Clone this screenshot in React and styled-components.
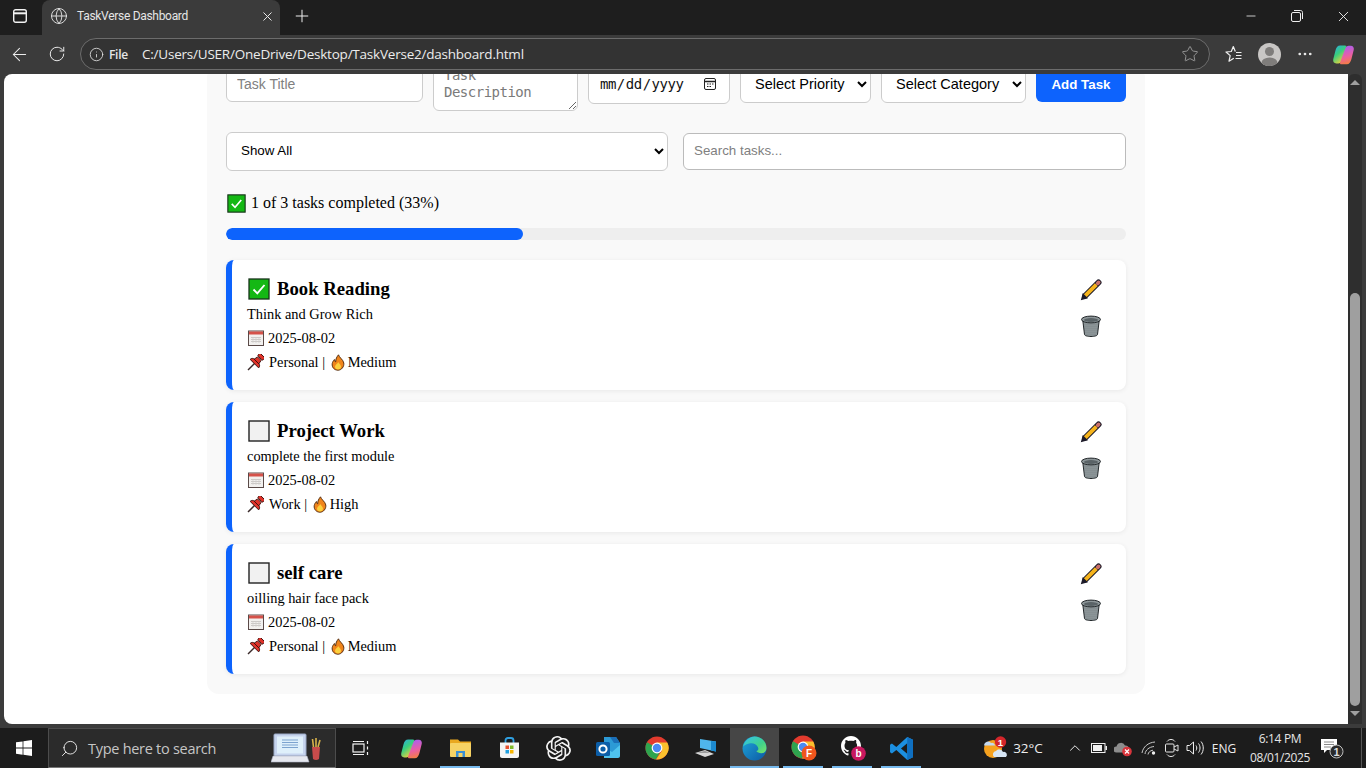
import React from "react";
import styled, { createGlobalStyle } from "styled-components";
import { ArrowLeft, RotateCw, Info, Star, X, Plus, Globe, Minus, MoreHorizontal, Search, ChevronUp } from "lucide-react";
import { SiOpenai } from "react-icons/si";

const Global = createGlobalStyle`
  html, body { margin: 0; padding: 0; height: 100%; overflow: hidden; background: #1f1f1f; }
  #root { height: 100%; }
  * { box-sizing: border-box; }
`;

const Screen = styled.div`
  width: 1366px; height: 768px; display: flex; flex-direction: column; overflow: hidden;
  font-family: "Open Sans", "Liberation Sans", sans-serif;
`;

/* ---------- browser chrome ---------- */
const TabStrip = styled.div`
  height: 35px; background: #1e1e1e; display: flex; align-items: flex-start; flex: none;
`;
const SquareButton = styled.div`
  width: 40px; height: 32px; display: flex; align-items: center; justify-content: center; color: #f0f0f0; flex: none;
`;
const Tab = styled.div`
  width: 238px; height: 35px; margin-left: 2px; padding: 0 5px 3px 8px; background: #3b3b3b; border-radius: 8px 8px 0 0;
  display: flex; align-items: center; gap: 9px; color: #e8e8e8; flex: none;
`;
const TabTitle = styled.span`
  flex: 1; font: 12px Roboto, "Open Sans", sans-serif; letter-spacing: -0.3px; white-space: nowrap; color: #e6e6e6;
`;
const NewTab = styled.div`
  width: 44px; height: 32px; display: flex; align-items: center; justify-content: center; color: #eee; flex: none;
`;
const Spacer = styled.div`flex: 1;`;
const WindowButton = styled.div`
  width: 46px; height: 32px; display: flex; align-items: center; justify-content: center; color: #eee; flex: none;
`;
const Toolbar = styled.div`
  height: 39px; background: #3b3b3b; display: flex; align-items: flex-start; flex: none; padding-top: 3px;
`;
const NavButton = styled.div`
  width: ${p => p.$w || 38}px; height: 32px; display: flex; align-items: center; justify-content: center; color: #ececec; flex: none;
`;
const AddressBar = styled.div`
  width: 1130px; height: 32px; margin-left: 4px; border: 1px solid #6c6c6c; border-radius: 16px; background: #333;
  display: flex; align-items: center; padding: 0 10px 0 8px; flex: none; color: #e8e8e8;
`;
const FileChip = styled.span`
  font-size: 12px; font-weight: 600; margin-left: 5px; width: 33px; color: #e6e6e6; letter-spacing: -0.3px;
`;
const Url = styled.span`
  flex: 1; font-size: 13.5px; color: #ececec; white-space: nowrap; letter-spacing: -0.22px;
`;
const Avatar = styled.div`
  width: 23px; height: 23px; border-radius: 50%; background: #c9c7c5; overflow: hidden; display: flex;
`;

/* ---------- viewport ---------- */
const Viewport = styled.div`
  height: 654px; flex: none; display: flex; align-items: flex-start; background: #3b3b3b; padding-left: 4px;
`;
const Page = styled.div`
  flex: 1; min-width: 0; height: 650px; background: #fff; border-radius: 8px 0 0 8px; overflow: hidden;
  display: flex; flex-direction: column; justify-content: flex-end; align-items: flex-start; padding: 0 0 30px 203px;
`;
const Panel = styled.main`
  width: 938px; flex: none; background: #f9f9f9; border-radius: 12px; padding: 0 19px 20px;
`;
const FormRow = styled.form`
  display: flex; gap: 10px; align-items: flex-start; margin-bottom: 21px;
`;
const Field = styled.input`
  width: ${p => p.$w}px; height: ${p => p.$h}px; flex: none; border: 1px solid #ccc; border-radius: 6px; background: #fff;
  font: 14px "Liberation Sans", Arial, sans-serif; padding: 10px; color: #000; outline: none;
  &::placeholder { color: #808080; }
`;
const calendarSvg = "data:image/svg+xml," + encodeURIComponent(
  '<svg xmlns="http://www.w3.org/2000/svg" width="14" height="14" viewBox="0 0 14 14" fill="none" stroke="#222"><rect x="1.500" y="1.500" width="11" height="11" rx="1.500"/><path d="M1.500 4.500h11" stroke-width="1.500"/><path d="M4 7h1.500M6.500 7H8M9 7h1.500M4 9.500h1.500M6.500 9.500H8"/></svg>'
);
const DateField = styled(Field)`
  font: 14px "DejaVu Sans Mono", "Liberation Mono", monospace; letter-spacing: -0.5px; padding: 0 12px 2px 10px; color: #111;
  &::-webkit-calendar-picker-indicator {
    background: url("${calendarSvg}") center / 14px 14px no-repeat; width: 14px; height: 14px; padding: 0; margin: 0;
  }
`;
const AreaField = styled.textarea`
  width: 145px; height: 45px; flex: none; border: 1px solid #ccc; border-radius: 6px; background: #fff;
  font: 14px/17px "DejaVu Sans Mono", "Liberation Mono", monospace; letter-spacing: -0.5px; padding: 0 10px; outline: none; overflow: hidden;
  &::placeholder { color: #7a7a7a; }
`;
const Dropdown = styled.select`
  width: ${p => p.$w}px; height: ${p => p.$h}px; flex: none; border: 1px solid #ccc; border-radius: 6px; background: #fff;
  font: ${p => p.$fs || 14.5}px "Liberation Sans", Arial, sans-serif; color: #000; padding: 0 0 2px 10px; outline: none;
`;
const AddButton = styled.button`
  width: 90px; height: 36px; flex: none; border: 0; border-radius: 6px; background: #0d63fd; color: #fff;
  font: bold 13.33px "Liberation Sans", Arial, sans-serif;
`;
const FilterRow = styled.div`
  display: flex; gap: 15px; align-items: center; margin-bottom: 21px;
`;
const SearchField = styled(Field)`
  border-color: #bbb; padding: 0 10px 2px; font-size: 13.33px;
`;
const ProgressLine = styled.div`
  display: flex; align-items: center; gap: 5px; height: 22px; margin-bottom: 14px; padding-left: 1px;
  font: 16px "Liberation Serif", "Times New Roman", serif; color: #000;
`;
const Track = styled.div`
  height: 12px; border-radius: 6px; background: #eee; overflow: hidden; margin-bottom: 20px;
`;
const Fill = styled.div`
  height: 100%; background: #0d63fd; border-radius: 6px;
`;
const TaskList = styled.div`
  display: flex; flex-direction: column; gap: 12px;
`;
const Card = styled.article`
  height: 130px; background: #fff; border-left: 6px solid #0d63fd; border-radius: 8px; padding: 15px 15px 0;
  display: flex; justify-content: space-between; box-shadow: 0 1px 5px rgba(0,0,0,.07);
  font: 14.4px "Liberation Serif", "Times New Roman", serif; color: #000;
`;
const CardBody = styled.div`
  display: flex; flex-direction: column;
`;
const TaskTitle = styled.h3`
  margin: 0; height: 27px; display: flex; align-items: center; gap: 7px; padding-left: 1px;
  font: bold 18.72px "Liberation Serif", "Times New Roman", serif;
`;
const TaskText = styled.div`
  height: 24px; display: flex; align-items: center; white-space: pre;
`;
const Glyph = styled.span`
  display: inline-flex; width: ${p => p.$w || 16}px; height: 16px; margin: ${p => p.$m || "0 4px 0 1px"}; flex: none;
`;
const Actions = styled.div`
  display: flex; flex-direction: column; gap: 14px; padding: 4px 9px 0 0;
`;

/* ---------- taskbar ---------- */
const Taskbar = styled.footer`
  height: 40px; flex: none; background: #1c1c1c; display: flex; align-items: stretch; color: #e9e9e9;
`;
const Start = styled.div`
  width: 48px; display: flex; align-items: center; justify-content: center; flex: none;
`;
const SearchBox = styled.div`
  width: 288px; margin-right: 2px; background: #2b2b2b; border: 1px solid #4c4c4c; border-bottom-color: #777; flex: none; display: flex; align-items: center;
  padding: 0 13px 0 11px; gap: 9px; font-size: 14.5px; letter-spacing: -0.28px;
`;
const SearchHint = styled.span`
  flex: 1; white-space: nowrap; color: #c6c6c6;
`;
const Slot = styled.div`
  width: 49px; flex: none; position: relative; display: flex; align-items: center; justify-content: center;
  padding-right: ${p => p.$shift || 0}px;
  background: ${p => p.$active ? "#464646" : "transparent"};
  &::after {
    content: ""; display: ${p => p.$run ? "block" : "none"}; position: absolute; bottom: 0; height: 2px; background: #76b9ed;
    left: ${p => p.$active ? 0 : 4}px; right: ${p => p.$active ? 0 : 5}px;
  }
`;
const Tray = styled.div`
  flex: 1; display: flex; align-items: center; min-width: 0;
`;
const TrayItem = styled.div`
  width: ${p => p.$w}px; flex: none; display: flex; align-items: center; justify-content: center; color: #eee;
  font-size: ${p => p.$fs || 12}px; margin-left: ${p => p.$ml || 0}px;
`;
const Clock = styled.div`
  width: 80px; margin-left: -1px; flex: none; text-align: center; font-size: 12px; line-height: 19px; color: #e6e6e6; letter-spacing: -0.35px;
`;
const ShowDesktop = styled.div`
  width: 5px; height: 100%; margin-left: auto; border-left: 1px solid #555; flex: none;
`;
const Badge = styled.text`
  font-family: "Liberation Sans", sans-serif; font-weight: 700;
`;
const ScrollTrack = styled.div`
  width: 14px; margin-right: 4px; height: 650px; background: #2e2e2e; flex: none; display: flex; flex-direction: column; align-items: center;
  padding: 6px 0 8px; border-radius: 6px 6px 0 0;
`;
const ScrollThumb = styled.div`
  width: 10px; height: 413px; margin-top: auto; margin-bottom: 5px; border-radius: 5px; background: #9f9f9f;
`;
const ScrollArrow = styled.div`
  width: 0; height: 0; border-left: 5px solid transparent; border-right: 5px solid transparent;
  ${p => p.$up ? "border-bottom: 5px solid #a0a0a0;" : "border-top: 5px solid #a0a0a0;"}
`;

/* ---------- drawn icons ---------- */
const CheckEmoji = ({ size = 22 }) => (
  <svg width={size} height={size} viewBox="0 0 22 22">
    <rect x="1" y="1" width="20" height="20" fill="#14b814" stroke="#17331a" strokeWidth="1.300" />
    <path d="M5.500 11.500l3.800 3.800 7.200-8.300" fill="none" stroke="#fff" strokeWidth="1.900" />
  </svg>
);
const EmptyBox = () => (
  <svg width="22" height="22" viewBox="0 0 22 22">
    <rect x="1" y="1" width="20" height="20" fill="#f1f1f1" stroke="#222" strokeWidth="1.400" />
  </svg>
);
const CalendarEmoji = () => (
  <svg width="16" height="16" viewBox="0 0 16 16">
    <rect x=".5" y="1" width="15" height="14.500" fill="#f2f0ee" stroke="#5a4a48" />
    <rect x="1" y="1.500" width="14" height="3" fill="#d5524a" />
    <path d="M3 7.500h10M3 9.500h10M3 11.500h10" stroke="#c8c4c2" strokeWidth=".9" />
    <path d="M5 7v6M8 7v6M11 7v6" stroke="#d0cdcb" strokeWidth=".7" />
  </svg>
);
const PinEmoji = () => (
  <svg width="17" height="17" viewBox="0 0 17 17">
    <path d="M1 16l6.500-6.500" stroke="#3a2a2a" strokeWidth="1.500" />
    <g transform="rotate(45 9.500 7.500)" fill="#e0332a" stroke="#3a0f0b" strokeWidth=".9" strokeLinejoin="round">
      <path d="M7 3.500h5l1 5H6z" />
      <rect x="6" y="-1" width="7" height="3.500" rx="1" />
      <path d="M5.500 7.500h8c1.200.5 2 1.500 2 3h-12c0-1.500.8-2.500 2-3z" />
    </g>
  </svg>
);
const FlameEmoji = () => (
  <svg width="14" height="17" viewBox="0 0 14 17">
    <path d="M7.500.8c.6 2.600 4.700 4.800 5.300 8.200.5 3.700-2.300 7.200-5.800 7.200-3.600 0-6.300-2.800-5.800-6.500.3-1.900 1.300-3 2.200-4.200.2 1.300.6 2 1.300 2.400C4.600 5 5.800 2.800 7.500.8z" fill="#f0851c" stroke="#4a2408" strokeWidth=".9" />
    <path d="M7.300 8c.3 1.400 2.700 2.500 2.700 4.800 0 1.600-1.300 2.800-3 2.800s-3-1.300-3-2.800c0-2 2.600-3 3.300-4.800z" fill="#fbd13e" />
  </svg>
);
const PencilEmoji = () => (
  <svg width="22" height="22" viewBox="0 0 22 22" fill="none">
    <path d="M5.500 16.500L18.500 3.500" stroke="#1c1a28" strokeWidth="6" strokeLinecap="round" />
    <path d="M.8 21.200L2.800 14 8 19.200z" fill="#1c1a28" />
    <path d="M5.300 16.700L16.300 5.700" stroke="#f6b41c" strokeWidth="3.900" />
    <path d="M17.700 4.300L18.600 3.400" stroke="#c9706a" strokeWidth="3.800" strokeLinecap="round" />
  </svg>
);
const TrashEmoji = () => (
  <svg width="22" height="22" viewBox="0 0 22 22">
    <defs>
      <pattern id="mesh" width="2" height="2" patternUnits="userSpaceOnUse">
        <rect width="2" height="2" fill="#98a1a4" />
        <circle cx="1" cy="1" r=".55" fill="#4f585c" />
      </pattern>
    </defs>
    <path d="M2.800 5.500l1.700 14c.1 1.200 3 2 6.500 2s6.400-.8 6.500-2l1.700-14z" fill="url(#mesh)" stroke="#23282b" strokeWidth="1" />
    <ellipse cx="11" cy="4.500" rx="9.500" ry="3.400" fill="#8d9699" stroke="#23282b" strokeWidth="1" />
    <ellipse cx="11" cy="5" rx="7" ry="1.900" fill="#5a6367" />
  </svg>
);
const TabsIcon = () => (
  <svg width="16" height="16" viewBox="0 0 16 16" fill="none" stroke="#f2f2f2" strokeWidth="1.400">
    <rect x="1.700" y="1.700" width="12.600" height="12.600" rx="2" />
    <path d="M1.700 5.300h12.600" strokeWidth="2" />
  </svg>
);
const RestoreIcon = () => (
  <svg width="12" height="12" viewBox="0 0 12 12" fill="none" stroke="#eee" strokeWidth="1">
    <rect x=".5" y="2.500" width="9" height="9" rx="1.500" />
    <path d="M3 .5h6.500c1.200 0 2 .8 2 2V9" />
  </svg>
);
const FavList = () => (
  <svg width="19" height="18" viewBox="0 0 19 18" fill="none" stroke="#f0f0f0" strokeWidth="1.200" strokeLinejoin="round">
    <path d="M9.800 13.200L5 16.200l1.200-5.600L2 7l5.300-.5 2-5 2 5" />
    <path d="M12 7.500h5.500M12 10.500h5.500M11.500 13.500h6" />
  </svg>
);
const CopilotLogo = ({ size = 24 }) => (
  <svg width={size} height={size} viewBox="0 0 24 24">
    <defs>
      <linearGradient id="cpA" x1="0" y1="0" x2=".6" y2="1">
        <stop offset="0" stopColor="#28a8ea" /><stop offset=".5" stopColor="#39cf7d" /><stop offset="1" stopColor="#f2d13c" />
      </linearGradient>
      <linearGradient id="cpB" x1=".4" y1="0" x2=".6" y2="1">
        <stop offset="0" stopColor="#a85ff0" /><stop offset=".55" stopColor="#ea5fa4" /><stop offset="1" stopColor="#f5803c" />
      </linearGradient>
    </defs>
    <path d="M8.500 2.500h5c1.500 0 2 1 1.500 2.300L10 18.500c-.6 1.700-1.600 2.800-3.500 2.800H4.500C2 21.300.8 19.500 1.300 17l2.400-9.500C4.500 4.300 6 2.500 8.500 2.500z" fill="url(#cpA)" />
    <path d="M15.500 22.300h-5.500c-1.500 0-2-1-1.500-2.300L14 5.500c.6-1.700 1.600-2.700 3.500-2.700h2c2.500 0 3.700 1.800 3.200 4.200l-2.400 9.800c-.8 3.200-2.300 5.500-4.800 5.500z" fill="url(#cpB)" />
  </svg>
);
const WinLogo = () => (
  <svg width="16" height="16" viewBox="0 0 16 16" fill="#fff">
    <path d="M0 2.300l6.600-.9v6.200H0zM7.400 1.300L16 0v7.600H7.400zM0 8.400h6.600v6.300L0 13.800zM7.400 8.400H16V16l-8.600-1.200z" />
  </svg>
);
const LaptopArt = () => (
  <svg width="51" height="30" viewBox="0 0 51 30">
    <rect x="3" y="1" width="32" height="22" rx="1" fill="#c6d4ee" stroke="#9aa9c6" />
    <rect x="6" y="3.500" width="26" height="17" fill="#dff0fb" />
    <path d="M11 7h16M11 9.500h16M11 12h16M11 14.500h16" stroke="#7da3cf" />
    <path d="M2 23h34l2 6H0z" fill="#e6e8ef" stroke="#aeb4c4" strokeWidth=".6" />
    <path d="M41 14h8l-1 12q-3 1.800-6 0z" fill="#c84b4b" />
    <path d="M42.500 14l-1-8M45 14l0-9M47 14l2-7" stroke="#d9b24a" strokeWidth="1.600" />
  </svg>
);
const TaskView = () => (
  <svg width="18" height="16" viewBox="0 0 18 16" fill="none" stroke="#f2f2f2" strokeWidth="1.200">
    <rect x="1" y="4" width="11" height="8" />
    <path d="M1 1.500h11M1 14.500h11" />
    <path d="M15.500 1v3M15.500 6.500v3M15.500 12v3" />
  </svg>
);
const Folder = () => (
  <svg width="23" height="20" viewBox="0 0 23 20">
    <path d="M1 1.500h8l2 2h11v4H1z" fill="#e9a820" />
    <rect x="1" y="5" width="21" height="14" rx="1" fill="#f6d264" />
    <rect x="7" y="13" width="9" height="6" fill="#3a8fd4" />
    <rect x="9.500" y="15" width="4" height="4" fill="#f6d264" />
  </svg>
);
const StoreIcon = () => (
  <svg width="21" height="22" viewBox="0 0 21 22">
    <path d="M6.500 6V3.500C6.500 2 7.500 1 9 1h3c1.500 0 2.500 1 2.500 2.500V6" fill="none" stroke="#2f9fe0" strokeWidth="1.800" />
    <path d="M1 5.500h19V19c0 1.200-.8 2-2 2H3c-1.200 0-2-.8-2-2z" fill="#f4f4f4" />
    <rect x="6.500" y="8.500" width="3.500" height="3.500" fill="#e8502f" />
    <rect x="11" y="8.500" width="3.500" height="3.500" fill="#7fba2a" />
    <rect x="6.500" y="13" width="3.500" height="3.500" fill="#1f9fe0" />
    <rect x="11" y="13" width="3.500" height="3.500" fill="#f7b500" />
  </svg>
);
const Outlook = () => (
  <svg width="26" height="24" viewBox="0 0 26 24">
    <path d="M9 1h12l4 6v11c0 1-1 2-2 2H9z" fill="#2c9ad6" />
    <path d="M15 1h6l4 6h-6z" fill="#1b6fb8" />
    <path d="M9 11l8 5 8-7v11c0 1-1 2-2 2H9z" fill="#4fc3ee" />
    <rect x="1" y="6" width="14" height="14" rx="1.500" fill="#0c5ea8" />
    <circle cx="8" cy="13" r="3.600" fill="none" stroke="#fff" strokeWidth="2" />
  </svg>
);
const ChromeLogo = ({ size = 24 }) => (
  <svg width={size} height={size} viewBox="0 0 24 24">
    <circle cx="12" cy="12" r="11.500" fill="#e33b2e" />
    <path d="M12 12L2 6.200A11.500 11.500 0 0 0 11 23.400L17 12z" fill="#2ea44f" />
    <path d="M12 6.500h10.300A11.500 11.500 0 0 1 11 23.400L16.800 15z" fill="#fbc02d" />
    <circle cx="12" cy="12" r="5.400" fill="#fff" />
    <circle cx="12" cy="12" r="4.200" fill="#4a8af4" />
  </svg>
);
const DesktopPc = () => (
  <svg width="24" height="24" viewBox="0 0 24 24">
    <path d="M6 3l16 2.500v10L6 12z" fill="#4fb6ec" />
    <path d="M17 5l5 .5v10l-5-1z" fill="#1c8ad0" />
    <path d="M1 17l10-3 9 4-9 3z" fill="#d8d8d8" />
    <path d="M3 17l8-2.200 5 2.200" fill="#9c9c9c" />
  </svg>
);
const EdgeLogo = () => (
  <svg width="25" height="25" viewBox="0 0 24 24">
    <defs>
      <linearGradient id="edA" x1="0" y1="0" x2="1" y2="1"><stop offset="0" stopColor="#1fa6d9" /><stop offset="1" stopColor="#0c59a4" /></linearGradient>
      <linearGradient id="edB" x1="0" y1="0" x2="1" y2="1"><stop offset="0" stopColor="#35c1f1" /><stop offset=".6" stopColor="#3fd28b" /><stop offset="1" stopColor="#7be36b" /></linearGradient>
    </defs>
    <circle cx="12" cy="12" r="11.500" fill="url(#edA)" />
    <path d="M1 10C3 3 9 .5 12 .5c6 0 11.500 4.500 11.500 11 0 3-2 5-5 5-2 0-4-.6-4.800-2 2-.4 2.500-2.300 1.500-4C14 8 11 6.500 8 7c-3 .5-5.500 2-7 3z" fill="url(#edB)" />
  </svg>
);
const GithubBadge = () => (
  <svg width="26" height="26" viewBox="0 0 26 26">
    <path d="M11 1C5.500 1 1 5.500 1 11c0 4.400 2.900 8.200 6.800 9.500.5.100.7-.2.700-.5v-1.800c-2.800.6-3.400-1.300-3.400-1.300-.5-1.100-1.100-1.500-1.100-1.500-.9-.6.100-.6.100-.6 1 .1 1.500 1 1.500 1 .9 1.500 2.300 1.100 2.900.8.100-.6.300-1.100.6-1.300-2.200-.3-4.600-1.100-4.600-4.900 0-1.100.4-2 1-2.700-.1-.2-.4-1.300.1-2.700 0 0 .8-.3 2.700 1 .8-.2 1.700-.3 2.500-.3s1.700.1 2.500.3c1.900-1.300 2.700-1 2.700-1 .5 1.400.2 2.500.1 2.700.6.700 1 1.600 1 2.700 0 3.800-2.300 4.600-4.600 4.900.4.300.7.900.7 1.900V20c0 .3.200.6.700.5C18.100 19.200 21 15.400 21 11 21 5.500 16.500 1 11 1z" fill="#fff" />
    <circle cx="18.500" cy="18.500" r="7.300" fill="#c9185f" />
    <Badge x="18.500" y="22" fontSize="10" fill="#fff" textAnchor="middle">b</Badge>
  </svg>
);
const VsCode = () => (
  <svg width="25" height="25" viewBox="0 0 24 24">
    <path d="M17.500 1L23 3.500v17L17.500 23 7 13.500 2.800 16.800 1 15.500V8.500l1.800-1.300L7 10.500zM17.500 7l-6 5 6 5z" fill="#1c8fe0" fillRule="evenodd" />
    <path d="M17.500 1L23 3.500v17L17.500 23V17V7z" fill="#0f6fc0" />
  </svg>
);
const ChromeF = () => (
  <svg width="28" height="28" viewBox="0 0 28 28">
    <g transform="translate(1 1)"><ChromeLogo size={24} /></g>
    <circle cx="19" cy="19" r="7.500" fill="#f0561d" />
    <Badge x="19" y="22.500" fontSize="10" fill="#fff" textAnchor="middle">F</Badge>
  </svg>
);
const Weather = () => (
  <svg width="26" height="24" viewBox="0 0 26 24">
    <circle cx="11" cy="13" r="9" fill="#f5a11e" />
    <path d="M2 9a4 4 0 0 1 7-2 3 3 0 0 1 4 2.500H2z" fill="#c4d8ee" />
    <path d="M12 21a3.500 3.500 0 0 1 2-6 4 4 0 0 1 7 1 3 3 0 0 1 3 5z" fill="#d7e6f5" />
    <circle cx="18.500" cy="6" r="5.700" fill="#d4262b" />
    <Badge x="18.500" y="9.500" fontSize="9.500" fill="#fff" textAnchor="middle">1</Badge>
  </svg>
);
const Battery = () => (
  <svg width="16" height="10" viewBox="0 0 16 10">
    <rect x=".5" y=".5" width="13.500" height="9" fill="none" stroke="#f0f0f0" />
    <rect x="2" y="2" width="9" height="6" fill="#f0f0f0" />
    <rect x="14.500" y="3" width="1.500" height="4" fill="#f0f0f0" />
  </svg>
);
const CloudOff = () => (
  <svg width="19" height="17" viewBox="0 0 19 17">
    <path d="M2.500 12.500a3 3 0 0 1 0-6 4.500 4.500 0 0 1 8.500-1 3.500 3.500 0 0 1 4 3.500v3.500z" fill="#8d8d8d" />
    <circle cx="13" cy="11.500" r="4.800" fill="#d9353c" />
    <path d="M11 9.500l4 4M15 9.500l-4 4" stroke="#fff" strokeWidth="1.200" />
  </svg>
);
const WifiIcon = () => (
  <svg width="16" height="16" viewBox="0 0 16 16" fill="none" stroke="#c9c9c9" strokeWidth="1">
    <path d="M1 13C2 7 7 2.500 14 2M4 14c.5-4 4-7 9-7.500M7 14.500c.3-2 2-4 5-4.300" />
    <circle cx="12.500" cy="13" r="1.700" fill="#eee" stroke="none" />
  </svg>
);
const CameraIcon = () => (
  <svg width="16" height="20" viewBox="0 0 16 20" fill="none" stroke="#e6e6e6" strokeWidth="1">
    <path d="M3 3.500C5 .8 9 .8 11 3.500M3 16.500c2 2.700 6 2.700 8 0" />
    <rect x="1.500" y="6" width="8.500" height="8" rx="1" />
    <path d="M10 9l4-2v6l-4-2" />
  </svg>
);
const SpeakerIcon = () => (
  <svg width="18" height="16" viewBox="0 0 18 16" fill="none" stroke="#eee" strokeWidth="1">
    <path d="M1 5.500h2.500L7.500 2v12l-4-3.500H1z" />
    <path d="M10 5.500c1 1.500 1 3.500 0 5M12.500 3.500c2 2.500 2 6.500 0 9M15 1.500c3 3.500 3 9.500 0 13" />
  </svg>
);
const Notification = () => (
  <svg width="26" height="24" viewBox="0 0 26 24">
    <path d="M1 3h16v11H7l-3 3v-3H1z" fill="#fff" />
    <path d="M4 6h10M4 8.500h10M4 11h7" stroke="#888" />
    <circle cx="16.500" cy="15.500" r="6.500" fill="#2a2a2a" stroke="#bdbdbd" strokeWidth="1" />
    <Badge x="16.500" y="19.500" fontSize="11" fill="#ddd" textAnchor="middle">1</Badge>
  </svg>
);

const tasks = [
  { title: "Book Reading", text: "Think and Grow Rich", date: "2025-08-02", cat: "Personal", pri: "Medium", done: true },
  { title: "Project Work", text: "complete the first module", date: "2025-08-02", cat: "Work", pri: "High", done: false },
  { title: "self care", text: "oilling hair face pack", date: "2025-08-02", cat: "Personal", pri: "Medium", done: false },
];

const dock = [
  { node: <TaskView />, shift: 4 }, { node: <CopilotLogo size={23} /> }, { node: <Folder />, run: true }, { node: <StoreIcon /> },
  { node: <SiOpenai size={25} color="#f2f2f2" /> }, { node: <Outlook /> }, { node: <ChromeLogo size={24} /> }, { node: <DesktopPc /> },
  { node: <EdgeLogo />, run: true, active: true }, { node: <ChromeF />, run: true }, { node: <GithubBadge />, run: true }, { node: <VsCode />, run: true },
];

export default function App() {
  return (
    <Screen>
      <Global />
      <TabStrip>
        <SquareButton><TabsIcon /></SquareButton>
        <Tab>
          <Globe size={18} strokeWidth={1.2} />
          <TabTitle>TaskVerse Dashboard</TabTitle>
          <X size={15} strokeWidth={1.6} />
        </Tab>
        <NewTab><Plus size={20} strokeWidth={1.2} /></NewTab>
        <Spacer />
        <WindowButton><Minus size={14} strokeWidth={1.4} /></WindowButton>
        <WindowButton><RestoreIcon /></WindowButton>
        <WindowButton><X size={17} strokeWidth={1.3} /></WindowButton>
      </TabStrip>
      <Toolbar>
        <NavButton><ArrowLeft size={21} strokeWidth={1.2} /></NavButton>
        <NavButton><RotateCw size={18} strokeWidth={1.3} /></NavButton>
        <AddressBar>
          <Info size={15} strokeWidth={1.3} />
          <FileChip>File</FileChip>
          <Url>C:/Users/USER/OneDrive/Desktop/TaskVerse2/dashboard.html</Url>
          <Star size={18} strokeWidth={1.1} color="#a8a8a8" />
        </AddressBar>
        <NavButton $w={46}><FavList /></NavButton>
        <NavButton $w={27}>
          <Avatar>
            <svg width="23" height="23" viewBox="0 0 23 23">
              <circle cx="11.500" cy="8.500" r="4.500" fill="#7f7d7b" />
              <ellipse cx="11.500" cy="20" rx="8" ry="5.500" fill="#7f7d7b" />
            </svg>
          </Avatar>
        </NavButton>
        <NavButton $w={44}><MoreHorizontal size={18} strokeWidth={1.6} /></NavButton>
        <NavButton $w={33}><CopilotLogo size={23} /></NavButton>
      </Toolbar>
      <Viewport>
        <Page>
          <Panel>
            <FormRow>
              <Field $w={197} $h={36} placeholder="Task Title" />
              <AreaField placeholder={"Task\nDescription"} rows={2} />
              <DateField type="date" $w={142} $h={38} />
              <Dropdown $w={131} $h={37} defaultValue="">
                <option value="">Select Priority</option>
              </Dropdown>
              <Dropdown $w={145} $h={37} defaultValue="">
                <option value="">Select Category</option>
              </Dropdown>
              <AddButton type="button">Add Task</AddButton>
            </FormRow>
            <FilterRow>
              <Dropdown $w={442} $h={39} $fs={13.33} defaultValue="all">
                <option value="all">Show All</option>
              </Dropdown>
              <SearchField $w={443} $h={37} placeholder="Search tasks..." />
            </FilterRow>
            <ProgressLine><CheckEmoji size={19} />1 of 3 tasks completed (33%)</ProgressLine>
            <Track><Fill style={{ width: "33%" }} /></Track>
            <TaskList>
              {tasks.map(t => (
                <Card key={t.title}>
                  <CardBody>
                    <TaskTitle>{t.done ? <CheckEmoji /> : <EmptyBox />}{t.title}</TaskTitle>
                    <TaskText>{t.text}</TaskText>
                    <TaskText><Glyph><CalendarEmoji /></Glyph>{t.date}</TaskText>
                    <TaskText>
                      <Glyph $w={17} $m="0 5px 0 0"><PinEmoji /></Glyph>{t.cat} | <Glyph $w={14} $m="0 3px 0 2px"><FlameEmoji /></Glyph>{t.pri}
                    </TaskText>
                  </CardBody>
                  <Actions><PencilEmoji /><TrashEmoji /></Actions>
                </Card>
              ))}
            </TaskList>
          </Panel>
        </Page>
        <ScrollTrack>
          <ScrollArrow $up />
          <ScrollThumb />
          <ScrollArrow />
        </ScrollTrack>
      </Viewport>
      <Taskbar>
        <Start><WinLogo /></Start>
        <SearchBox>
          <Search size={19} strokeWidth={1.2} style={{ transform: "scaleX(-1)" }} />
          <SearchHint>Type here to search</SearchHint>
          <LaptopArt />
        </SearchBox>
        {dock.map((d, i) => <Slot key={i} $run={d.run} $active={d.active} $shift={d.shift}>{d.node}</Slot>)}
        <Tray>
          <TrayItem $w={26} $ml={56}><Weather /></TrayItem>
          <TrayItem $w={40} $fs={13.5}>32°C</TrayItem>
          <TrayItem $w={26} $ml={14}><ChevronUp size={18} strokeWidth={1.3} /></TrayItem>
          <TrayItem $w={22}><Battery /></TrayItem>
          <TrayItem $w={26}><CloudOff /></TrayItem>
          <TrayItem $w={25}><WifiIcon /></TrayItem>
          <TrayItem $w={22}><CameraIcon /></TrayItem>
          <TrayItem $w={24}><SpeakerIcon /></TrayItem>
          <TrayItem $w={34} $fs={12}>ENG</TrayItem>
          <Clock>6:14 PM<br />08/01/2025</Clock>
          <TrayItem $w={26}><Notification /></TrayItem>
          <ShowDesktop />
        </Tray>
      </Taskbar>
    </Screen>
  );
}
